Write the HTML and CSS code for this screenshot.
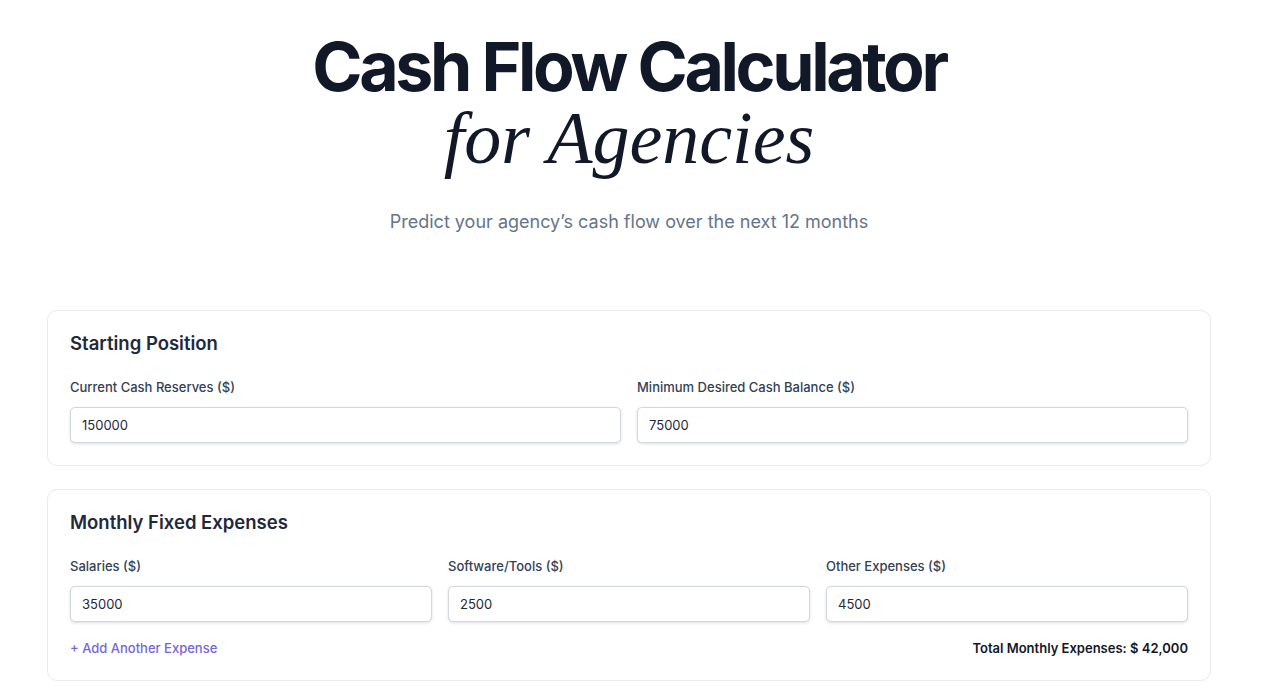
FILE: index.html
```html
<!DOCTYPE html>
<html lang="en">
<head>
<meta charset="utf-8">
<title>Cash Flow Calculator for Agencies</title>
<link rel="stylesheet" href="styles.css">
</head>
<body>
<main class="page">
  <header class="hero">
    <h1 class="title">
      <span class="title-main">Cash Flow Calculator</span>
      <span class="title-sub">for Agencies</span>
    </h1>
    <p class="subtitle">Predict your agency’s cash flow over the next 12 months</p>
  </header>

  <section class="card">
    <h2 class="card-title">Starting Position</h2>
    <div class="grid grid-2">
      <div class="field">
        <label class="label">Current Cash Reserves ($)</label>
        <input class="input" type="text" value="150000">
      </div>
      <div class="field">
        <label class="label">Minimum Desired Cash Balance ($)</label>
        <input class="input" type="text" value="75000">
      </div>
    </div>
  </section>

  <section class="card">
    <h2 class="card-title">Monthly Fixed Expenses</h2>
    <div class="grid grid-3">
      <div class="field">
        <label class="label">Salaries ($)</label>
        <input class="input" type="text" value="35000">
      </div>
      <div class="field">
        <label class="label">Software/Tools ($)</label>
        <input class="input" type="text" value="2500">
      </div>
      <div class="field">
        <label class="label">Other Expenses ($)</label>
        <input class="input" type="text" value="4500">
      </div>
    </div>
    <div class="card-footer">
      <a class="add-link" href="#">+ Add Another Expense</a>
      <span class="total">Total Monthly Expenses: $ 42,000</span>
    </div>
  </section>
</main>
</body>
</html>
```

FILE: styles.css
```css
* { box-sizing: border-box; }

html, body {
  margin: 0;
  padding: 0;
  background: #ffffff;
}

body {
  font-family: Inter, "Noto Sans", "Liberation Sans", sans-serif;
  color: #0f172a;
}

.page {
  width: 1164px;
  margin: 0 0 0 47px;
  padding-top: 30px;
}

.hero {
  text-align: center;
}

.title {
  margin: 0;
  font-weight: 700;
}

.title-main {
  display: block;
  font-family: Inter, "Liberation Sans", sans-serif;
  font-size: 68px;
  line-height: 72px;
  letter-spacing: -0.05em;
  color: #111827;
}

.title-sub {
  display: block;
  font-family: "Liberation Serif", "DejaVu Serif", serif;
  font-style: italic;
  font-weight: 400;
  font-size: 74px;
  line-height: 72px;
  color: #111827;
}

.subtitle {
  margin: 34px 0 0;
  font-size: 18px;
  line-height: 28px;
  color: #64748b;
}

.card {
  margin-top: 74px;
  border: 1px solid #e8eaee;
  border-radius: 10px;
  padding: 22px;
  background: #fff;
}

.card + .card {
  margin-top: 23px;
}

.card-title {
  margin: 0 0 24px;
  font-size: 18.5px;
  line-height: 20px;
  font-weight: 600;
  color: #1e293b;
}

.grid {
  display: grid;
  column-gap: 16px;
}

.grid-2 { grid-template-columns: 1fr 1fr; }
.grid-3 { grid-template-columns: 1fr 1fr 1fr; }

.field {
  display: flex;
  flex-direction: column;
}

.label {
  font-size: 13px;
  line-height: 20px;
  font-weight: 500;
  color: #334155;
  margin-bottom: 10px;
}

.input {
  height: 36px;
  width: 100%;
  border: 1px solid #d3d7de;
  border-radius: 5px;
  box-shadow: 0 1px 3px rgba(15, 23, 42, 0.14);
  padding: 0 11px;
  font-family: Inter, "Liberation Sans", sans-serif;
  font-size: 13px;
  color: #1f2937;
  background: #fff;
  outline: none;
}

.card-footer {
  margin-top: 16px;
  display: flex;
  justify-content: space-between;
  align-items: center;
  line-height: 20px;
}

.add-link {
  font-size: 13px;
  font-weight: 500;
  color: #7466dc;
  text-decoration: none;
}

.total {
  font-size: 13px;
  font-weight: 600;
  color: #111827;
}
```
